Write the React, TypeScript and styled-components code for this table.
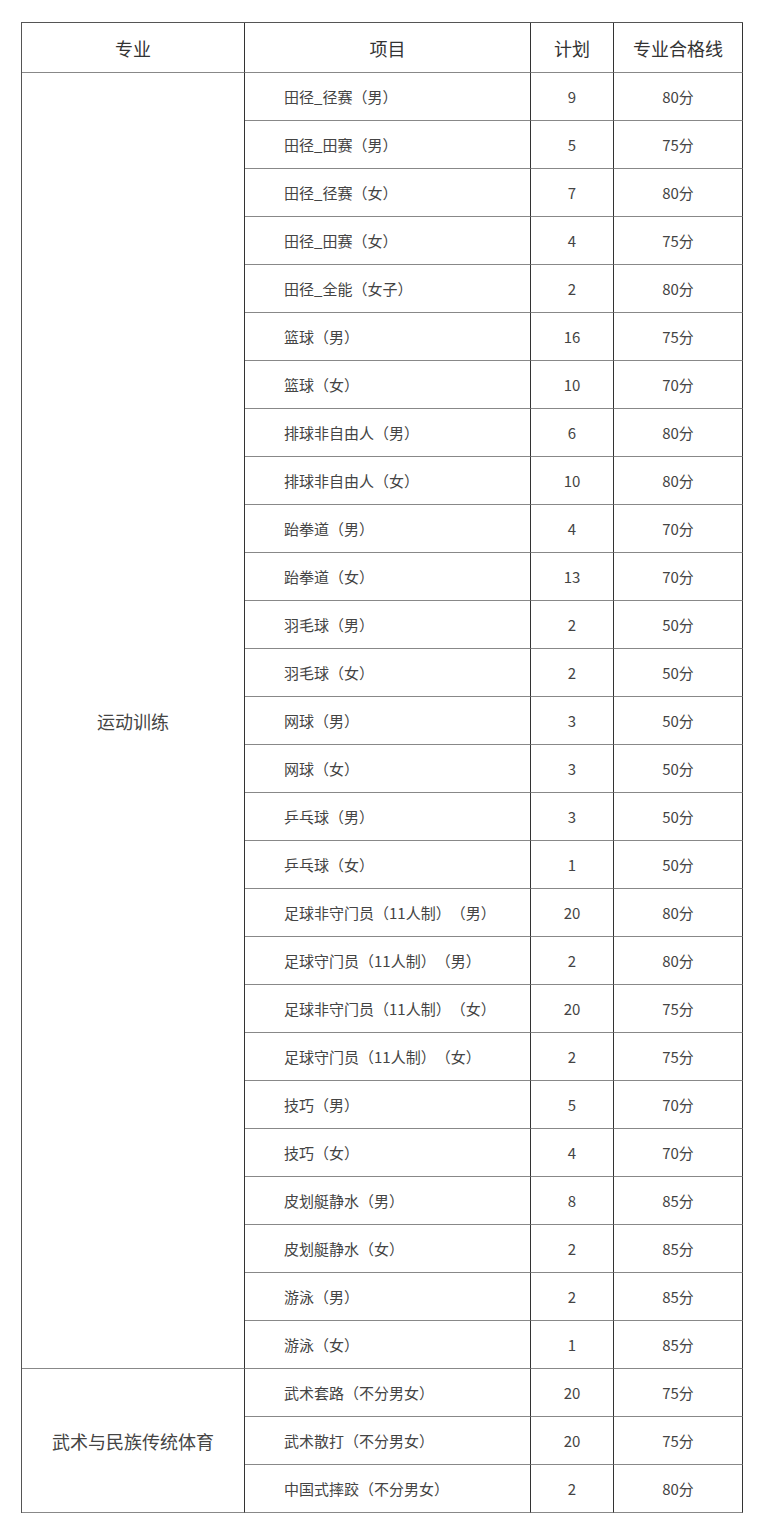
import styled, { createGlobalStyle } from 'styled-components';

const GlobalStyle = createGlobalStyle`
  html, body {
    margin: 0;
    padding: 0;
    background: #ffffff;
  }
  body {
    font-family: "Noto Sans CJK SC", "Noto Sans", sans-serif;
  }
`;

const Page = styled.div`
  width: 765px;
  min-height: 1535px;
  padding: 22px 0 0 21px;
  box-sizing: border-box;
`;

const Table = styled.table`
  width: 722px;
  table-layout: fixed;
  border-collapse: separate;
  border-spacing: 0;
  border-top: 1px solid #555;
  border-left: 1px solid #555;
`;

const HeadCell = styled.th<{ $width: number }>`
  width: ${({ $width }) => $width}px;
  height: 50px;
  padding: 0;
  box-sizing: border-box;
  font-size: 18px;
  font-weight: 400;
  color: #333;
  text-align: center;
  border-right: 1px solid #333;
  border-bottom: 1px solid #888;
`;

const Row = styled.tr`
  height: 48px;
`;

const Cell = styled.td<{ $align?: 'left' | 'center'; $big?: boolean }>`
  padding: ${({ $align }) => ($align === 'left' ? '0 0 0 39px' : '0')};
  box-sizing: border-box;
  height: 48px;
  font-size: ${({ $big }) => ($big ? '18px' : '15px')};
  color: #444;
  text-align: ${({ $align }) => $align ?? 'center'};
  white-space: nowrap;
  text-spacing-trim: space-all;
  border-right: 1px solid #333;
  border-bottom: 1px solid #888;
`;

type Item = { name: string; plan: number; score: string };

const groups: { major: string; items: Item[] }[] = [
  {
    major: '运动训练',
    items: [
      { name: '田径_径赛（男）', plan: 9, score: '80分' },
      { name: '田径_田赛（男）', plan: 5, score: '75分' },
      { name: '田径_径赛（女）', plan: 7, score: '80分' },
      { name: '田径_田赛（女）', plan: 4, score: '75分' },
      { name: '田径_全能（女子）', plan: 2, score: '80分' },
      { name: '篮球（男）', plan: 16, score: '75分' },
      { name: '篮球（女）', plan: 10, score: '70分' },
      { name: '排球非自由人（男）', plan: 6, score: '80分' },
      { name: '排球非自由人（女）', plan: 10, score: '80分' },
      { name: '跆拳道（男）', plan: 4, score: '70分' },
      { name: '跆拳道（女）', plan: 13, score: '70分' },
      { name: '羽毛球（男）', plan: 2, score: '50分' },
      { name: '羽毛球（女）', plan: 2, score: '50分' },
      { name: '网球（男）', plan: 3, score: '50分' },
      { name: '网球（女）', plan: 3, score: '50分' },
      { name: '乒乓球（男）', plan: 3, score: '50分' },
      { name: '乒乓球（女）', plan: 1, score: '50分' },
      { name: '足球非守门员（11人制）（男）', plan: 20, score: '80分' },
      { name: '足球守门员（11人制）（男）', plan: 2, score: '80分' },
      { name: '足球非守门员（11人制）（女）', plan: 20, score: '75分' },
      { name: '足球守门员（11人制）（女）', plan: 2, score: '75分' },
      { name: '技巧（男）', plan: 5, score: '70分' },
      { name: '技巧（女）', plan: 4, score: '70分' },
      { name: '皮划艇静水（男）', plan: 8, score: '85分' },
      { name: '皮划艇静水（女）', plan: 2, score: '85分' },
      { name: '游泳（男）', plan: 2, score: '85分' },
      { name: '游泳（女）', plan: 1, score: '85分' },
    ],
  },
  {
    major: '武术与民族传统体育',
    items: [
      { name: '武术套路（不分男女）', plan: 20, score: '75分' },
      { name: '武术散打（不分男女）', plan: 20, score: '75分' },
      { name: '中国式摔跤（不分男女）', plan: 2, score: '80分' },
    ],
  },
];

const App = () => (
  <Page>
    <GlobalStyle />
    <Table>
      <thead>
        <tr>
          <HeadCell $width={223}>专业</HeadCell>
          <HeadCell $width={286}>项目</HeadCell>
          <HeadCell $width={83}>计划</HeadCell>
          <HeadCell $width={129}>专业合格线</HeadCell>
        </tr>
      </thead>
      <tbody>
        {groups.map((group) =>
          group.items.map((item, i) => (
            <Row key={group.major + item.name}>
              {i === 0 && (
                <Cell $big rowSpan={group.items.length}>
                  {group.major}
                </Cell>
              )}
              <Cell $align="left">{item.name}</Cell>
              <Cell>{item.plan}</Cell>
              <Cell>{item.score}</Cell>
            </Row>
          )),
        )}
      </tbody>
    </Table>
  </Page>
);

export default App;
